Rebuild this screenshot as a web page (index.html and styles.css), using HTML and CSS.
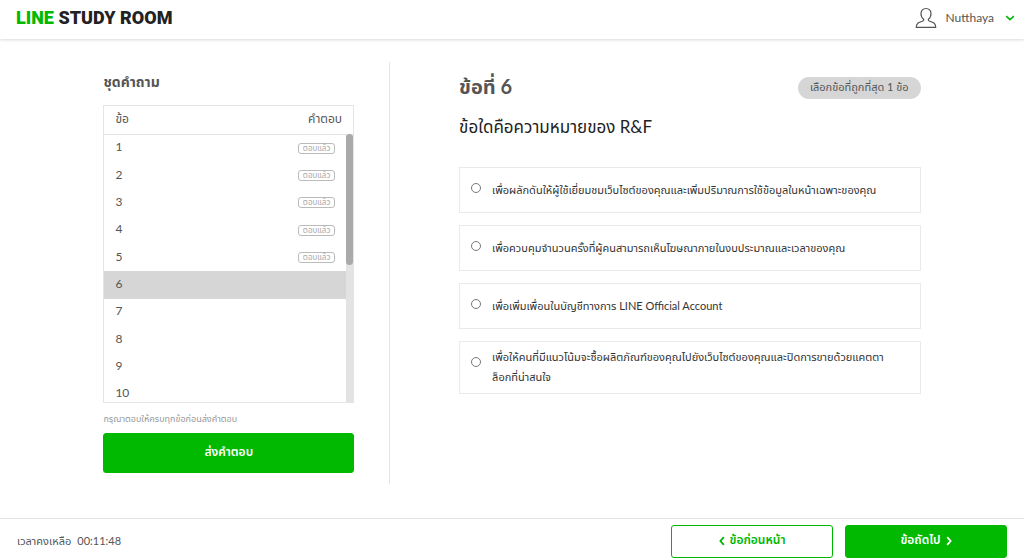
FILE: index.html
```html
<!DOCTYPE html>
<html lang="th">
<head>
<meta charset="utf-8">
<meta name="viewport" content="width=device-width, initial-scale=1">
<title>LINE Study Room</title>
<link rel="stylesheet" href="styles.css">
</head>
<body>
<header class="topbar">
  <a class="logo" href="#"><span class="logo-accent">LINE</span> STUDY ROOM</a>
  <button class="account" type="button">
    <svg class="account-icon" viewBox="0 0 22 22" aria-hidden="true"><path d="M11 1.500C7.900 1.500 6 3.700 6 6.500c0 2.600 1 4.500 2.600 5.700.4 1.200-.1 1.600-1.300 2C4 15.200 1.300 16 1.300 20.300h19.400c0-4.300-2.700-5.100-6-6.100-1.200-.4-1.700-.8-1.300-2C15 11 16 9.100 16 6.500c0-2.800-1.900-5-5-5z"/></svg>
    <span>Nutthaya</span>
    <svg class="account-caret" viewBox="0 0 10 6" aria-hidden="true"><path d="M1.200 1.200 5 4.600 8.800 1.200"/></svg>
  </button>
</header>

<main class="content">
  <aside class="sidebar">
    <h2 class="sidebar-title">ชุดคำถาม</h2>
    <div class="list">
      <table class="questions">
        <thead><tr><th scope="col">ข้อ</th><th scope="col" class="answer">คำตอบ</th></tr></thead>
        <tbody>
          <tr><td>1</td><td class="answer"><span class="tag">ตอบแล้ว</span></td></tr>
          <tr><td>2</td><td class="answer"><span class="tag">ตอบแล้ว</span></td></tr>
          <tr><td>3</td><td class="answer"><span class="tag">ตอบแล้ว</span></td></tr>
          <tr><td>4</td><td class="answer"><span class="tag">ตอบแล้ว</span></td></tr>
          <tr><td>5</td><td class="answer"><span class="tag">ตอบแล้ว</span></td></tr>
          <tr class="current"><td>6</td><td></td></tr>
          <tr><td>7</td><td></td></tr>
          <tr><td>8</td><td></td></tr>
          <tr><td>9</td><td></td></tr>
          <tr><td>10</td><td></td></tr>
        </tbody>
      </table>
      <div class="scroll-track"><div class="scroll-thumb"></div></div>
    </div>
    <p class="hint">กรุณาตอบให้ครบทุกข้อก่อนส่งคำตอบ</p>
    <button class="btn btn-solid btn-submit" type="button">ส่งคำตอบ</button>
  </aside>

  <section class="question">
    <div class="question-head">
      <h1 class="question-number">ข้อที่ 6</h1>
      <span class="pill">เลือกข้อที่ถูกที่สุด 1 ข้อ</span>
    </div>
    <p class="question-text" id="question-text">ข้อใดคือความหมายของ R&amp;F</p>
    <div class="options" role="radiogroup" aria-labelledby="question-text">
      <label class="option"><input type="radio" name="answer"><span>เพื่อผลักดันให้ผู้ใช้เยี่ยมชมเว็บไซต์ของคุณและเพิ่มปริมาณการใช้ข้อมูลในหน้าเฉพาะของคุณ</span></label>
      <label class="option"><input type="radio" name="answer"><span>เพื่อควบคุมจำนวนครั้งที่ผู้คนสามารถเห็นโฆษณาภายในงบประมาณและเวลาของคุณ</span></label>
      <label class="option"><input type="radio" name="answer"><span>เพื่อเพิ่มเพื่อนในบัญชีทางการ LINE Official Account</span></label>
      <label class="option"><input type="radio" name="answer"><span>เพื่อให้คนที่มีแนวโน้มจะซื้อผลิตภัณฑ์ของคุณไปยังเว็บไซต์ของคุณและปิดการขายด้วยแคตตา<wbr>ล็อกที่น่าสนใจ</span></label>
    </div>
  </section>
</main>

<footer class="bottombar">
  <p class="timer"><span>เวลาคงเหลือ</span><span>00:11:48</span></p>
  <div class="pager">
    <button class="btn btn-outline" type="button"><svg class="chevron" viewBox="0 0 6 10" aria-hidden="true"><path d="M4.800 1.200 1.400 5l3.400 3.800"/></svg>ข้อก่อนหน้า</button>
    <button class="btn btn-solid" type="button">ข้อถัดไป<svg class="chevron" viewBox="0 0 6 10" aria-hidden="true"><path d="M1.200 1.200 4.600 5 1.200 8.800"/></svg></button>
  </div>
</footer>
</body>
</html>
```
FILE: styles.css
```css
* {
  box-sizing: border-box;
}

body {
  margin: 0;
  min-height: 100vh;
  display: flex;
  flex-direction: column;
  background: #fff;
  color: #555;
  font-family: Lato, "Noto Sans Thai", "Noto Sans", sans-serif;
  font-size: 12px;
  line-height: 20px;
}

h1, h2, p {
  margin: 0;
}

button {
  font: inherit;
  cursor: pointer;
}

svg {
  fill: none;
}

.topbar {
  display: flex;
  justify-content: space-between;
  align-items: center;
  height: 39px;
  padding: 0 9px 4px 16px;
  box-shadow: 0 1px 3px rgba(0, 0, 0, 0.15);
}

.logo {
  color: #222;
  font-family: Roboto, sans-serif;
  font-size: 18px;
  font-weight: 900;
  text-decoration: none;
}

.logo-accent {
  color: #00b900;
}

.account {
  display: flex;
  align-items: center;
  gap: 9px;
  padding: 0;
  border: 0;
  background: none;
  color: #555;
}

.account-icon {
  width: 22px;
  height: 22px;
  stroke: #555;
  stroke-width: 1.2;
}

.account-caret {
  width: 10px;
  height: 6px;
  margin-left: 2px;
  stroke: #00b900;
  stroke-width: 1.6;
}

.content {
  flex: 1;
  display: grid;
  grid-template-columns: 287fr 531fr;
  width: 80%;
  margin: 0 auto;
  padding: 23px 1px 34px;
}

.sidebar {
  padding: 10px 35px 10px 0;
  border-right: 1px solid #e5e5e5;
}

.sidebar-title {
  margin-bottom: 13px;
  font-size: 14px;
  line-height: 20px;
}

.list {
  position: relative;
  height: 298px;
  overflow: hidden;
  border: 1px solid #e5e5e5;
}

.questions {
  width: 100%;
  height: 302px;
  border-collapse: collapse;
}

.questions th {
  height: 28px;
  padding: 0 11px 2px;
  border-bottom: 1px solid #e5e5e5;
  font-weight: 400;
  text-align: left;
}

.questions td {
  padding: 0 11px 2px;
}

.questions .answer {
  text-align: right;
}

.questions td.answer {
  padding-right: 18px;
}

.current {
  background: #d6d6d6;
}

.tag {
  display: block;
  width: 37px;
  margin: 2px 0 0 auto;
  border: 1px solid #bbb;
  border-radius: 3px;
  color: #aaa;
  font-size: 8px;
  line-height: 9px;
  text-align: center;
}

.scroll-track {
  position: absolute;
  top: 28px;
  right: 0;
  bottom: 0;
  width: 7px;
  background: #e3e3e3;
}

.scroll-thumb {
  height: 49%;
  border-radius: 4px;
  background: #aaa;
}

.hint {
  margin: 10px 0 8px;
  color: #999;
  font-size: 9px;
  line-height: 12px;
}

.btn {
  display: flex;
  justify-content: center;
  align-items: center;
  gap: 5px;
  width: 162px;
  height: 33px;
  padding: 0 0 2px;
  border: 1px solid #00b900;
  border-radius: 3px;
  font-weight: 600;
}

.btn-solid {
  background: #00b900;
  color: #fff;
}

.btn-outline {
  background: #fff;
  color: #00b900;
}

.btn-submit {
  width: 100%;
  height: 40px;
}

.chevron {
  width: 6px;
  height: 10px;
  margin-top: 2px;
  stroke: currentColor;
  stroke-width: 1.8;
}

.question {
  padding: 8px 0 0 69px;
}

.question-head {
  display: flex;
  justify-content: space-between;
  align-items: flex-end;
}

.question-number {
  font-size: 20px;
  line-height: 32px;
}

.pill {
  margin-bottom: 3px;
  padding: 0 12px 2px;
  border-radius: 11px;
  background: #d6d6d6;
  font-size: 11px;
}

.question-text {
  margin: 12px 0 28px;
  color: #222;
  font-size: 17px;
  line-height: 25px;
}

.options {
  display: grid;
  gap: 12px;
}

.option {
  display: flex;
  align-items: center;
  gap: 11px;
  min-height: 46px;
  padding: 5px 24px 6px 11px;
  border: 1px solid #eaeaea;
  color: #333;
  font-size: 11px;
}

.option input {
  appearance: none;
  flex: none;
  align-self: flex-start;
  width: 10px;
  height: 10px;
  margin: 10px 0 0;
  border: 1px solid #777;
  border-radius: 50%;
}

.option input:checked {
  border: 3px solid #00b900;
}

.bottombar {
  display: flex;
  justify-content: space-between;
  align-items: center;
  height: 42px;
  padding: 3px 17px 0;
  border-top: 1px solid #e5e5e5;
}

.timer {
  display: flex;
  gap: 6px;
  font-size: 11px;
}

.pager {
  display: flex;
  gap: 12px;
}
```
